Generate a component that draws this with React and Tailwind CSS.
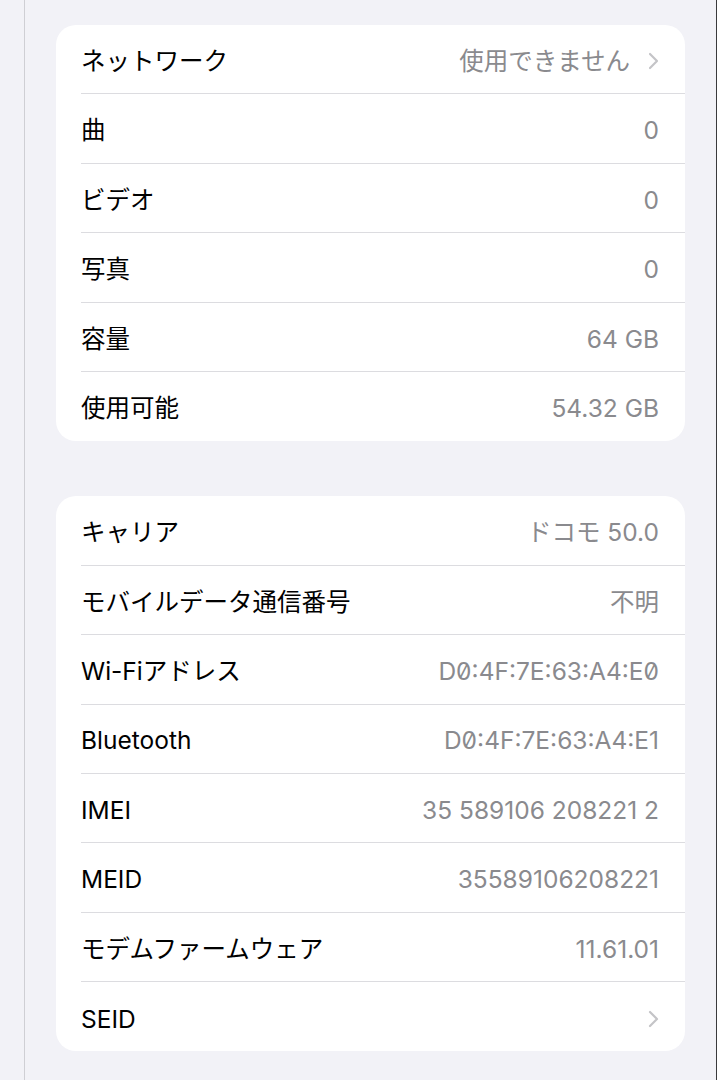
const storage = [
  { label: 'ネットワーク', value: '使用できません', chevron: true },
  { label: '曲', value: '0' },
  { label: 'ビデオ', value: '0' },
  { label: '写真', value: '0' },
  { label: '容量', value: '64 GB' },
  { label: '使用可能', value: '54.32 GB' },
]

const device = [
  { label: 'キャリア', value: 'ドコモ 50.0' },
  { label: 'モバイルデータ通信番号', value: '不明' },
  { label: 'Wi-Fiアドレス', value: 'D0:4F:7E:63:A4:E0', mono: true },
  { label: 'Bluetooth', value: 'D0:4F:7E:63:A4:E1', mono: true },
  { label: 'IMEI', value: '35 589106 208221 2' },
  { label: 'MEID', value: '35589106208221' },
  { label: 'モデムファームウェア', value: '11.61.01' },
  { label: 'SEID', value: '', chevron: true },
]

function Chevron() {
  return (
    <svg width="11" height="18" viewBox="0 0 11 18" className="ml-[18px] shrink-0">
      <path d="M2 2 L9 9 L2 16" fill="none" stroke="#c4c4c7" strokeWidth="2.2" strokeLinecap="round" strokeLinejoin="round" />
    </svg>
  )
}

function Row({ row, last }) {
  return (
    <div className="h-[69.4px] pl-[25px] flex flex-col">
      <div className="flex-1 flex items-center justify-between pr-[26px] pt-[4px]">
        <span className="text-black">{row.label}</span>
        <div className="flex items-center">
          <span className={`text-[#8a8a8e] ${row.mono ? "[font-feature-settings:'zero']" : ''}`}>{row.value}</span>
          {row.chevron && <Chevron />}
        </div>
      </div>
      {!last && <div className="h-px bg-[#dcdce0]" />}
    </div>
  )
}

function Card({ rows }) {
  return (
    <div className="bg-white rounded-[20px] overflow-hidden">
      {rows.map((r, i) => (
        <Row key={r.label} row={r} last={i === rows.length - 1} />
      ))}
    </div>
  )
}

export default function App() {
  return (
    <div
      className="w-[717px] h-[1080px] overflow-hidden bg-[#f2f2f7] flex text-[24.5px] leading-none"
      style={{ fontFamily: 'Inter, "Noto Sans CJK JP", sans-serif' }}
    >
      <div className="w-6 shrink-0" />
      <div className="w-px bg-[#cfcfd4] shrink-0" />
      <div className="flex-1 pl-[31px] pr-[31px] pt-[25px] flex flex-col gap-[55px]">
        <Card rows={storage} />
        <Card rows={device} />
      </div>
      <div className="w-px bg-[#3a3a3c] shrink-0" />
    </div>
  )
}
